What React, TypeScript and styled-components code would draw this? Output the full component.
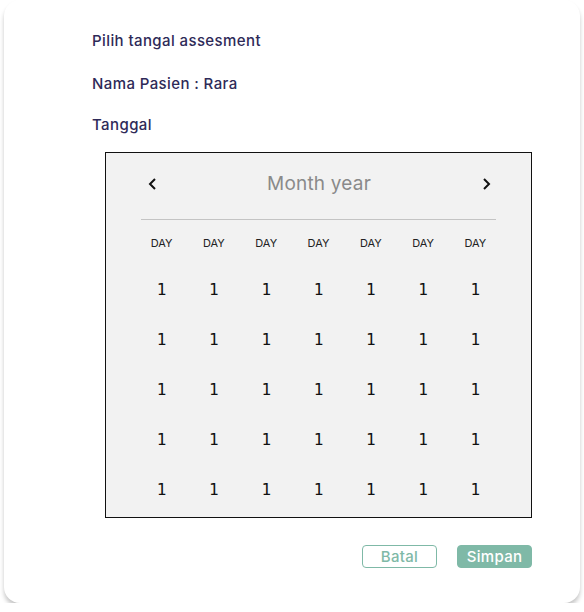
import React from "react";
import styled, { createGlobalStyle } from "styled-components";

const Global = createGlobalStyle`
  html, body { margin: 0; padding: 0; background: #ffffff; }
  body { font-family: "Inter", "Open Sans", sans-serif; }
`;

const Card = styled.div`
  box-sizing: border-box;
  margin: 0 4px;
  width: 576px;
  height: 603px;
  background: #ffffff;
  border-radius: 16px;
  box-shadow: 0 4px 4px rgba(0, 0, 0, 0.22);
  padding: 31px 48px 0 88px;
  display: flex;
  flex-direction: column;
`;

const Label = styled.div<{ $gap?: number }>`
  font-family: "Inter", sans-serif;
  font-weight: 500;
  font-size: 15px;
  line-height: 20px;
  letter-spacing: 0.4px;
  color: #2e2a58;
  margin-top: ${(p) => p.$gap ?? 0}px;
`;

const Calendar = styled.div`
  box-sizing: border-box;
  margin-top: 17px;
  margin-left: 13px;
  width: 427px;
  height: 366px;
  border: 1px solid #111;
  background: #f2f2f2;
  padding-top: 15px;
  display: flex;
  flex-direction: column;
  align-items: center;
`;

const Header = styled.div`
  width: 366px;
  height: 32px;
  display: flex;
  align-items: center;
  justify-content: space-between;
  padding: 0 9px 0 10px;
  box-sizing: border-box;
`;

const Title = styled.div`
  font-family: "Inter", sans-serif;
  font-size: 19px;
  letter-spacing: 0.2px;
  color: #8a8a8a;
  margin-top: -1px;
`;

const Chevron = styled.svg`
  width: 14px;
  height: 14px;
  display: block;
`;

const Divider = styled.div`
  margin-top: 19px;
  width: 355px;
  height: 1px;
  background: #c4c4c4;
`;

const Grid = styled.div`
  margin-top: 15px;
  width: 366px;
  display: grid;
  grid-template-columns: repeat(7, 1fr);
  grid-template-rows: 29px repeat(5, 50px);
`;

const DayLabel = styled.div`
  font-family: "Inter", sans-serif;
  font-size: 11px;
  line-height: 16px;
  color: #222;
  text-align: center;
  align-self: start;
`;

const DateCell = styled.div`
  font-family: "DejaVu Sans Mono", monospace;
  font-size: 16px;
  color: #111;
  display: flex;
  align-items: center;
  justify-content: center;
`;

const Actions = styled.div`
  margin-top: 27px;
  display: flex;
  justify-content: flex-end;
  gap: 20px;
`;

const Button = styled.button<{ $primary?: boolean }>`
  box-sizing: border-box;
  width: 75px;
  height: 23px;
  border-radius: 4px;
  border: 1px solid #7fb9a7;
  background: ${(p) => (p.$primary ? "#7fb9a7" : "#ffffff")};
  color: ${(p) => (p.$primary ? "#ffffff" : "#7fb9a7")};
  font-family: "Inter", sans-serif;
  font-weight: 500;
  font-size: 15px;
  letter-spacing: 0.3px;
  padding: 0;
  line-height: 21px;
`;

const days = Array.from({ length: 7 });
const rows = Array.from({ length: 5 });

export default function App() {
  return (
    <>
      <Global />
      <Card>
        <Label>Pilih tangal assesment</Label>
        <Label $gap={23}>Nama Pasien : Rara</Label>
        <Label $gap={21}>Tanggal</Label>
        <Calendar>
          <Header>
            <Chevron viewBox="0 0 14 14">
              <path d="M9 2 L4 7 L9 12" fill="none" stroke="#111" strokeWidth="2" />
            </Chevron>
            <Title>Month year</Title>
            <Chevron viewBox="0 0 14 14">
              <path d="M5 2 L10 7 L5 12" fill="none" stroke="#111" strokeWidth="2" />
            </Chevron>
          </Header>
          <Divider />
          <Grid>
            {days.map((_, i) => (
              <DayLabel key={"d" + i}>DAY</DayLabel>
            ))}
            {rows.map((_, r) =>
              days.map((_, c) => <DateCell key={r + "-" + c}>1</DateCell>)
            )}
          </Grid>
        </Calendar>
        <Actions>
          <Button>Batal</Button>
          <Button $primary>Simpan</Button>
        </Actions>
      </Card>
    </>
  );
}
